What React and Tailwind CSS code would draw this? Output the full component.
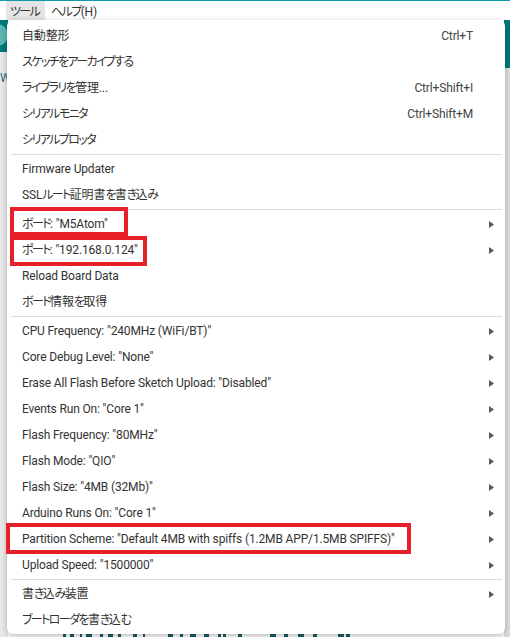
import React from "react";

const rows = [
  { t: "item", label: "自動整形", sc: "Ctrl+T" },
  { t: "item", label: "スケッチをアーカイブする" },
  { t: "item", label: "ライブラリを管理...", sc: "Ctrl+Shift+I" },
  { t: "item", label: "シリアルモニタ", sc: "Ctrl+Shift+M" },
  { t: "item", label: "シリアルプロッタ" },
  { t: "sep" },
  { t: "item", label: "Firmware Updater" },
  { t: "item", label: "SSLルート証明書を書き込み" },
  { t: "sep" },
  { t: "item", label: 'ボード: "M5Atom"', sub: true },
  { t: "item", label: 'ポート: "192.168.0.124"', sub: true },
  { t: "item", label: "Reload Board Data" },
  { t: "item", label: "ボード情報を取得" },
  { t: "sep" },
  { t: "item", label: 'CPU Frequency: "240MHz (WiFi/BT)"', sub: true },
  { t: "item", label: 'Core Debug Level: "None"', sub: true },
  { t: "item", label: 'Erase All Flash Before Sketch Upload: "Disabled"', sub: true },
  { t: "item", label: 'Events Run On: "Core 1"', sub: true },
  { t: "item", label: 'Flash Frequency: "80MHz"', sub: true },
  { t: "item", label: 'Flash Mode: "QIO"', sub: true },
  { t: "item", label: 'Flash Size: "4MB (32Mb)"', sub: true },
  { t: "item", label: 'Arduino Runs On: "Core 1"', sub: true },
  { t: "item", label: 'Partition Scheme: "Default 4MB with spiffs (1.2MB APP/1.5MB SPIFFS)"', sub: true },
  { t: "item", label: 'Upload Speed: "1500000"', sub: true },
  { t: "sep" },
  { t: "item", label: "書き込み装置", sub: true },
  { t: "item", label: "ブートローダを書き込む" },
];

function Label({ text }) {
  const parts = text.split(/([\u3040-\u30ff]+)/);
  return (
    <>
      {parts.map((p, i) =>
        /^[\u3040-\u30ff]+$/.test(p) ? (
          <span key={i} className="tracking-[-1.6px]">
            {p}
          </span>
        ) : (
          <span key={i}>{p}</span>
        )
      )}
    </>
  );
}

function Arrow() {
  return (
    <svg width="5" height="7" viewBox="0 0 5 7" className="block">
      <polygon points="0,0 5,3.5 0,7" fill="#5a5a5a" />
    </svg>
  );
}

const marks = [
  [55, 3], [62, 4], [72, 2], [78, 6], [92, 3], [100, 5], [110, 3], [125, 4], [135, 2], [160, 5], [172, 3],
  [182, 6], [196, 5], [210, 3], [215, 3], [230, 4], [262, 6], [276, 4], [290, 6], [305, 4], [330, 6], [338, 4],
];

export default function App() {
  return (
    <div
      className="relative w-[510px] h-[637px] overflow-hidden bg-white text-[12px] text-[#333] tracking-[-0.15px] [font-feature-settings:'palt']"
      style={{ fontFamily: 'Roboto, "Noto Sans CJK JP", sans-serif' }}
    >
      {/* menu bar */}
      <div className="h-[20px] border-t border-[#0e98aa] flex items-stretch pl-[6px] bg-white">
        <div className="bg-[#e5e5e5] w-[39px] pl-[4px] pt-[2px] flex items-center leading-none">
          <Label text="ツール" />
        </div>
        <div className="pl-[6px] pt-[2px] flex items-center leading-none">
          <Label text="ヘルプ" />
          (H)
        </div>
      </div>

      {/* background window content */}
      <div className="flex h-[617px]">
        <div className="w-[8px] flex flex-col">
          <div className="h-[32px] bg-[#00797d] relative overflow-hidden">
            <div className="absolute left-[-14px] top-[4px] w-[22px] h-[22px] rounded-full bg-[#5bb8b6]" />
          </div>
          <div className="flex-1 bg-[#e9e9e9] pt-[20px] text-[#1f6f8a] text-[12px] leading-none">W</div>
        </div>
        <div className="flex-1 flex flex-col justify-end">
          <div className="h-[3px] flex">
            {marks.map(([x, w], i) => (
              <div
                key={i}
                className="h-[3px] bg-[#1d5e63] shrink-0"
                style={{ marginLeft: i === 0 ? x : x - marks[i - 1][0] - marks[i - 1][1], width: w }}
              />
            ))}
          </div>
        </div>
        <div className="w-[6px] flex flex-col">
          <div className="h-[48px] bg-[#00787c]" />
          <div className="flex-1 bg-[#dedede]" />
        </div>
      </div>

      {/* dropdown menu */}
      <div className="absolute left-[7px] top-[20px] w-[498px] bg-white rounded-[6px] shadow-[0_2px_6px_rgba(0,0,0,0.28)] pt-[3px] pb-[1px]">
        {rows.map((r, i) =>
          r.t === "sep" ? (
            <div key={i} className="h-[3px] flex items-center">
              <div className="ml-[4px] mr-[3px] flex-1 h-px bg-[#dcdcdc]" />
            </div>
          ) : (
            <div key={i} className="h-[26px] flex items-center pl-[15px] whitespace-nowrap">
              <div className="flex-1">
                <Label text={r.label} />
              </div>
              {r.sc && <div className="text-[#444]">{r.sc}</div>}
              <div className="w-[32px] flex items-center pl-[16px]">{r.sub && <Arrow />}</div>
            </div>
          )
        )}

        {/* red annotation boxes */}
        <div className="absolute left-[3px] top-[187px] w-[118px] h-[29px] border-[4px] border-[#e8202a]" />
        <div className="absolute left-[3px] top-[216px] w-[137px] h-[30px] border-[4px] border-[#e8202a]" />
        <div className="absolute left-[-1px] top-[503px] w-[405px] h-[31px] border-[4px] border-[#e8202a]" />
      </div>
    </div>
  );
}
